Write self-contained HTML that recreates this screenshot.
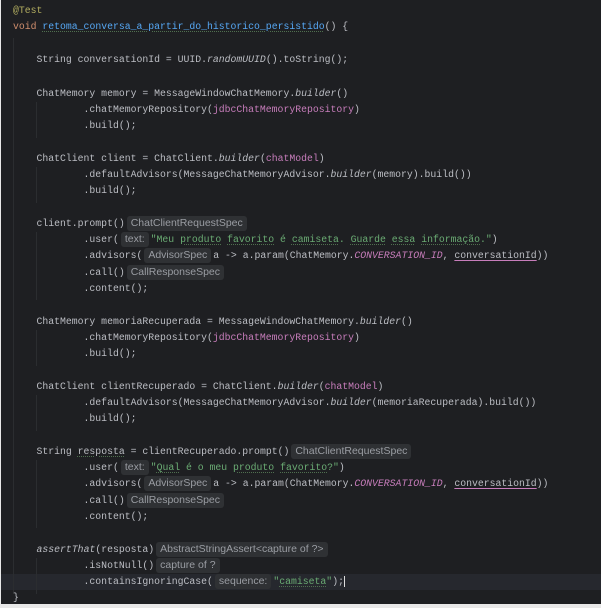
<!DOCTYPE html>
<html><head><meta charset="utf-8"><style>
html,body{margin:0;padding:0}
body{width:601px;height:608px;background:#e8e8e8;overflow:hidden;position:relative}
#ed{position:absolute;left:1px;top:0;width:600px;height:604px;background:#1e1f22}
.l{position:absolute;left:12px;height:16px;line-height:16px;white-space:pre;font-family:"Liberation Mono",monospace;font-size:9.8px;color:#bcbec4}
.k{color:#cf8e6d}.m{color:#56a8f5}.p{color:#c77dbb}.s{color:#6aab73}.a{color:#b3ae60}.i{font-style:italic}
.u{text-decoration:underline;text-decoration-style:dotted;text-decoration-color:#4f6f4f;text-decoration-thickness:1px;text-underline-offset:2px}
.pu{text-decoration:underline;text-decoration-color:#c77dbb;text-underline-offset:2px}
.h{display:inline-block;font-family:"Liberation Sans",sans-serif;font-size:10.5px;color:#9a9da3;background:#2f3134;border-radius:3px;padding:0 4px;line-height:15px;margin:0 2px;vertical-align:0px}
.g{position:absolute;width:1px;background:#2b2d30}
.cur{position:absolute;left:0;width:600px;height:16px;background:#26282e}
</style></head><body><div id="ed">
<div class="cur" style="top:574px"></div>
<div class="g" style="left:12px;top:38px;height:556px"></div>
<div class="g" style="left:35px;top:102px;height:36px"></div>
<div class="g" style="left:35px;top:167px;height:36px"></div>
<div class="g" style="left:35px;top:232px;height:68px"></div>
<div class="g" style="left:35px;top:330px;height:36px"></div>
<div class="g" style="left:35px;top:395px;height:36px"></div>
<div class="g" style="left:35px;top:460px;height:68px"></div>
<div class="g" style="left:35px;top:558px;height:36px"></div>
<div class="l a" style="top:3px">@Test</div>
<div class="l" style="top:19px"><span class="k">void </span><span class="m u">retoma_conversa_a_partir_do_historico_persistido</span>() {</div>
<div class="l" style="top:52px">    String conversationId = UUID.<span class="i">randomUUID</span>().toString();</div>
<div class="l" style="top:86px">    ChatMemory memory = MessageWindowChatMemory.<span class="i">builder</span>()</div>
<div class="l" style="top:102px">            .chatMemoryRepository(<span class="p">jdbcChatMemoryRepository</span>)</div>
<div class="l" style="top:118px">            .build();</div>
<div class="l" style="top:151px">    ChatClient client = ChatClient.<span class="i">builder</span>(<span class="p">chatModel</span>)</div>
<div class="l" style="top:167px">            .defaultAdvisors(MessageChatMemoryAdvisor.<span class="i">builder</span>(memory).build())</div>
<div class="l" style="top:183px">            .build();</div>
<div class="l" style="top:216px">    client.prompt()<span class="h">ChatClientRequestSpec</span></div>
<div class="l" style="top:232px">            .user(<span class="h">text:</span><span class="s">"Meu <span class="u">produto</span> <span class="u">favorito</span> é <span class="u">camiseta</span>. <span class="u">Guarde</span> <span class="u">essa</span> <span class="u">informação</span>."</span>)</div>
<div class="l" style="top:248px">            .advisors(<span class="h">AdvisorSpec</span>a -&gt; a.param(ChatMemory.<span class="p i">CONVERSATION_ID</span>, <span class="pu">conversationId</span>))</div>
<div class="l" style="top:265px">            .call()<span class="h">CallResponseSpec</span></div>
<div class="l" style="top:281px">            .content();</div>
<div class="l" style="top:314px">    ChatMemory memoriaRecuperada = MessageWindowChatMemory.<span class="i">builder</span>()</div>
<div class="l" style="top:330px">            .chatMemoryRepository(<span class="p">jdbcChatMemoryRepository</span>)</div>
<div class="l" style="top:346px">            .build();</div>
<div class="l" style="top:379px">    ChatClient clientRecuperado = ChatClient.<span class="i">builder</span>(<span class="p">chatModel</span>)</div>
<div class="l" style="top:395px">            .defaultAdvisors(MessageChatMemoryAdvisor.<span class="i">builder</span>(memoriaRecuperada).build())</div>
<div class="l" style="top:411px">            .build();</div>
<div class="l" style="top:444px">    String <span class="u">resposta</span> = clientRecuperado.prompt()<span class="h">ChatClientRequestSpec</span></div>
<div class="l" style="top:460px">            .user(<span class="h">text:</span><span class="s">"<span class="u">Qual</span> é o meu <span class="u">produto</span> <span class="u">favorito</span>?"</span>)</div>
<div class="l" style="top:476px">            .advisors(<span class="h">AdvisorSpec</span>a -&gt; a.param(ChatMemory.<span class="p i">CONVERSATION_ID</span>, <span class="pu">conversationId</span>))</div>
<div class="l" style="top:493px">            .call()<span class="h">CallResponseSpec</span></div>
<div class="l" style="top:509px">            .content();</div>
<div class="l" style="top:542px">    <span class="i">assertThat</span>(resposta)<span class="h">AbstractStringAssert&lt;capture of ?&gt;</span></div>
<div class="l" style="top:558px">            .isNotNull()<span class="h">capture of ?</span></div>
<div class="l" style="top:574px">            .containsIgnoringCase(<span class="h">sequence:</span><span class="s">"<span class="u">camiseta</span>"</span>);<span style="border-left:1px solid #ddd"></span></div>
<div class="l" style="top:590px">}</div>
</div></body></html>
